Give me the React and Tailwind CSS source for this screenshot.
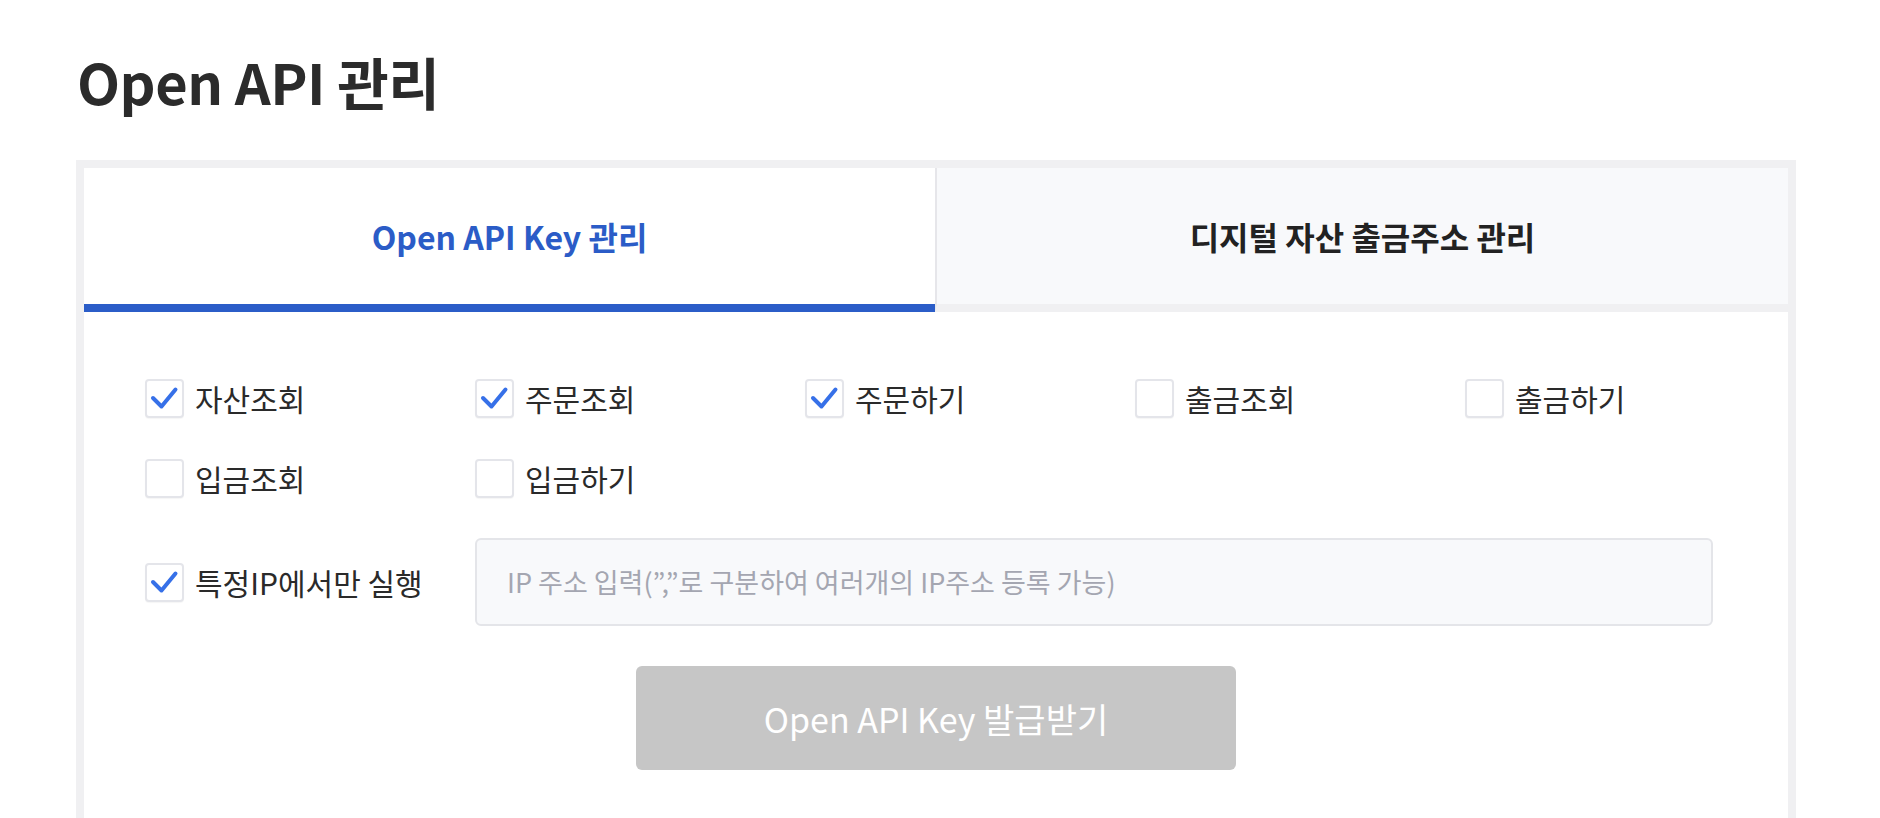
import React from "react";

function Check({ checked }) {
  return (
    <span className="w-[39px] h-[39px] shrink-0 rounded-[4px] border-2 border-[#e4e5ea] bg-white shadow-[0_1px_1px_rgba(0,0,0,0.04)] flex items-center justify-center">
      {checked && (
        <svg width="35" height="35" viewBox="0 0 35 35" fill="none">
          <path d="M6 17 L14.5 25.5 L28.5 8.5" stroke="#3670e8" strokeWidth="4" strokeLinecap="round" strokeLinejoin="round" />
        </svg>
      )}
    </span>
  );
}

function Item({ label, checked, w = true }) {
  return (
    <label className={"flex items-center shrink-0 " + (w ? "w-[330px]" : "")}>
      <Check checked={checked} />
      <span className="ml-[11px] text-[30px] leading-none text-[#2a2a2a]">{label}</span>
    </label>
  );
}

export default function App() {
  return (
    <div className="min-h-screen bg-white font-['Noto_Sans_CJK_KR','Noto_Sans',sans-serif] px-[76px]">
      <h1 className="pt-[45px] pl-[1px] text-[56px] leading-[72px] font-bold text-[#2b2b2b] tracking-[-0.5px]">
        Open API 관리
      </h1>
      <div className="mt-[43px] border-8 border-b-0 border-[#f0f0f2] w-[1720px]">
        <div className="flex h-[144px]">
          <div className="flex-1 flex items-center justify-center bg-white border-b-8 border-[#2b5dc8]">
            <span className="text-[32px] font-bold text-[#2b5cc7]">Open API Key 관리</span>
          </div>
          <div className="flex-1 flex items-center justify-center bg-[#f8f9fb] border-l-2 border-l-[#e6e6ea] border-b-8 border-b-[#f0f0f2]">
            <span className="text-[32px] font-bold text-[#222222]">디지털 자산 출금주소 관리</span>
          </div>
        </div>
        <div className="pt-[66px] pb-[80px]">
          <div className="pl-[61px] pr-[75px] flex flex-col gap-[40px]">
            <div className="flex h-[40px] items-center">
              <Item label="자산조회" checked />
              <Item label="주문조회" checked />
              <Item label="주문하기" checked />
              <Item label="출금조회" />
              <Item label="출금하기" w={false} />
            </div>
            <div className="flex h-[40px] items-center">
              <Item label="입금조회" />
              <Item label="입금하기" />
            </div>
            <div className="flex h-[88px] items-center">
              <Item label="특정IP에서만 실행" checked />
              <div className="flex-1 h-[88px] rounded-[6px] border-2 border-[#e4e5e9] bg-[#f8f9fb] flex items-center pl-[30px]">
                <span className="text-[27px] text-[#a4a6b1]">IP 주소 입력(”,”로 구분하여 여러개의 IP주소 등록 가능)</span>
              </div>
            </div>
          </div>
          <div className="flex justify-center mt-[40px]">
            <button className="w-[600px] h-[104px] rounded-[6px] bg-[#c6c6c6] text-white text-[34px] font-['Noto_Sans_CJK_KR','Noto_Sans',sans-serif]">
              Open API Key 발급받기
            </button>
          </div>
        </div>
      </div>
    </div>
  );
}
